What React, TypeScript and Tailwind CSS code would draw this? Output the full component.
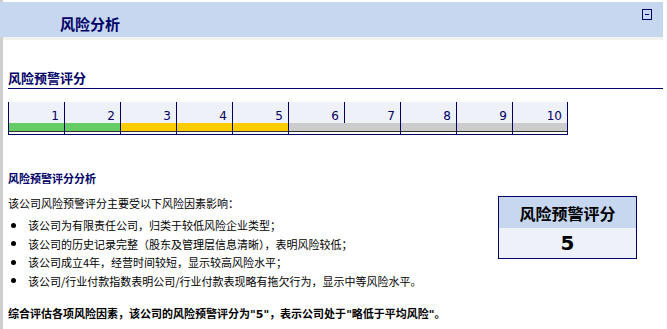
const NAVY = "border-[#000066]";

const levels = [
  { n: 1, bar: "bg-[#66cc66]" },
  { n: 2, bar: "bg-[#66cc66]" },
  { n: 3, bar: "bg-[#ffcc00]" },
  { n: 4, bar: "bg-[#ffcc00]" },
  { n: 5, bar: "bg-[#ffcc00]" },
  { n: 6, bar: "bg-[#cccccc]" },
  { n: 7, bar: "bg-[#cccccc]" },
  { n: 8, bar: "bg-[#cccccc]" },
  { n: 9, bar: "bg-[#cccccc]" },
  { n: 10, bar: "bg-[#cccccc]" },
];

const factors = [
  "该公司为有限责任公司，归类于较低风险企业类型；",
  "该公司的历史记录完整（股东及管理层信息清晰），表明风险较低；",
  "该公司成立4年，经营时间较短，显示较高风险水平；",
  "该公司/行业付款指数表明公司/行业付款表现略有拖欠行为，显示中等风险水平。",
];

const ScaleCell = ({ n, bar, index }: { n: number; bar: string; index: number }) => {
  const splitLine = index === 6;
  const last = index === levels.length - 1;
  return (
    <div
      className={`flex w-[56px] flex-col ${splitLine ? "" : `border-l ${NAVY}`} ${
        last ? `border-r ${NAVY}` : ""
      }`}
    >
      <div
        className={`h-[21px] bg-[#eef1f7] pr-[5px] pt-[7px] text-right font-['DejaVu_Sans',sans-serif] text-[12px] leading-[14px] text-[#000066] ${
          splitLine ? `border-l ${NAVY}` : ""
        }`}
      >
        {n}
      </div>
      <div className={`h-[8px] ${bar}`} />
      <div className="h-[1px] bg-[#333333]" />
      <div className="h-[2px] bg-white" />
    </div>
  );
};

export default function App() {
  return (
    <div className="min-h-[329px] w-[667px] border-l-[3px] border-[#cfcfcf] bg-white font-['Noto_Sans_CJK_SC','DejaVu_Sans',sans-serif] text-black">
      <div className="h-[2px]" />
      <div className="-ml-[3px] flex h-[35px] w-[663px] justify-between bg-[#c6d7ef] pl-[60px] pr-[11px]">
        <div className="mt-[13px] text-[15px] font-bold leading-[18px] text-[#000066]">风险分析</div>
        <div className="mt-[7px] flex h-[11px] w-[10px] items-center justify-center border border-[#000066]">
          <div className="h-[1px] w-[4px] bg-[#000066]" />
        </div>
      </div>
      <div className="h-[3px] w-[660px] bg-[#f2f2f2]" />

      <div className="pl-[5px]">
        <div className="mt-[30px] w-[655px] border-b border-[#000066] pb-[2px] text-[13px] font-bold leading-[16px] text-[#000066]">
          风险预警评分
        </div>

        <div className="mt-[13px] flex w-fit border-b border-[#000066]">
          {levels.map((l, i) => (
            <ScaleCell key={l.n} n={l.n} bar={l.bar} index={i} />
          ))}
        </div>

        <div className="mt-[35px] text-[11px] font-bold leading-[16px] text-[#000066]">风险预警评分分析</div>

        <div className="mt-[9px] flex">
          <div className="w-[490px] text-[11px]">
            <p className="leading-[16px]">该公司风险预警评分主要受以下风险因素影响：</p>
            <ul className="mt-[5px]">
              {factors.map((f) => (
                <li key={f} className="flex items-center leading-[18.5px]">
                  <span className="ml-[3px] mr-[12px] h-[5px] w-[5px] rounded-full bg-black" />
                  {f}
                </li>
              ))}
            </ul>
          </div>

          <div className="mt-[1px] h-[63px] w-[139px] border border-[#000066]">
            <div className="flex h-[31px] items-center justify-center bg-[#c6d7ef] text-[16px] font-bold">
              风险预警评分
            </div>
            <div className="flex h-[30px] items-center justify-center bg-[#eef1f7] font-['DejaVu_Sans',sans-serif] text-[20px] font-bold">
              5
            </div>
          </div>
        </div>

        <p className="mt-[15px] text-[11px] font-bold leading-[16px]">
          综合评估各项风险因素，该公司的风险预警评分为<span className="font-['DejaVu_Sans',sans-serif]">"5"</span>，表示公司处于<span className="font-['DejaVu_Sans',sans-serif]">"</span>略低于平均风险<span className="font-['DejaVu_Sans',sans-serif]">"</span>。
        </p>
      </div>
    </div>
  );
}
